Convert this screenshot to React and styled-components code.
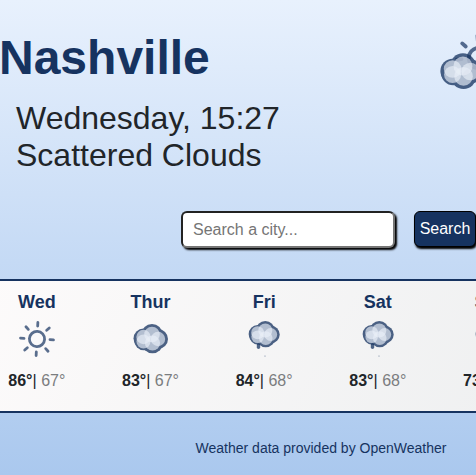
import React from "react";
import styled, { createGlobalStyle } from "styled-components";

const navy = "#163360";

const GlobalStyle = createGlobalStyle`
  * { box-sizing: border-box; }
  body {
    margin: 0;
    color: #212529;
    font-family: "Liberation Sans", Arial, sans-serif;
    font-size: 16px;
  }
`;

const Viewport = styled.div`
  min-height: 100vh;
  overflow: hidden;
  background: linear-gradient(#e8f1fd, #c5daf5 55%, #aac8ee);
`;

const Page = styled.div`
  min-width: 642px;
`;

const Header = styled.header`
  display: grid;
  grid-template-columns: 1fr auto;
  padding: 30px 104px 0 0;
`;

const City = styled.h1`
  margin: 0 0 0 -1px;
  color: ${navy};
  font-size: 48px;
  line-height: 56px;
`;

const Details = styled.p`
  grid-column: 1 / -1;
  margin: 0;
  padding: 14px 16px 0;
  font-size: 32px;
  line-height: 37px;
`;

const CurrentIcon = styled.svg`
  display: block;
  width: 100px;
  height: 56px;
  overflow: visible;
`;

const SearchForm = styled.form`
  display: flex;
  justify-content: center;
  align-items: flex-start;
  gap: 19px;
  padding: 37px 0 30px 15px;
`;

const SearchInput = styled.input`
  width: 214px;
  height: 37px;
  padding: 0 10px;
  border: 2px solid;
  border-color: #222 #767676 #767676 #222;
  border-radius: 6px;
  background: #fff;
  box-shadow: 2px 2px 2px #000;
  font: 16px "Liberation Sans", Arial, sans-serif;
  &::placeholder { color: #757575; opacity: 1; }
`;

const SearchButton = styled.button`
  width: 62px;
  height: 36px;
  padding: 0;
  border: 1px solid #000;
  border-radius: 6px;
  background: ${navy};
  color: #fff;
  box-shadow: 1px 2px 2px #000;
  font: 16px "Liberation Sans", Arial, sans-serif;
`;

const Forecast = styled.section`
  display: grid;
  grid-template-columns: repeat(6, 1fr);
  margin: 1px -20px 0;
  padding: 11px 0 21px;
  border: solid ${navy};
  border-width: 2px 0;
  background: linear-gradient(120deg, #fdfbfb, #ebedee);
`;

const Day = styled.article`
  text-align: center;
`;

const DayName = styled.h2`
  margin: 0;
  color: ${navy};
  font-size: 18px;
  line-height: 20px;
`;

const DayIcon = styled.svg`
  display: block;
  width: 50px;
  height: 50px;
  margin: 2px auto 8px;
`;

const Temps = styled.p`
  margin: 0;
  line-height: 18px;
`;

const Low = styled.span`
  color: #7b7d7f;
`;

const Footer = styled.footer`
  padding: 27px 0 19px;
  color: ${navy};
  font-size: 14px;
  line-height: 16px;
  text-align: center;
`;

const FooterLink = styled.a`
  color: inherit;
  text-decoration: none;
`;

const rays = [0, 45, 90, 135, 180, 225, 270, 315];

function Sun({ cx = 25, cy = 25, scale = 1, turn = 3 }) {
  return (
    <g
      transform={`translate(${cx} ${cy}) scale(${scale}) rotate(${turn})`}
      fill="none"
      stroke={navy}
      strokeWidth="2.8"
      strokeLinecap="round"
      opacity="0.7"
    >
      <circle r="7.6" />
      {rays.map((a) => (
        <path key={a} d="M0-13V-16.5" transform={`rotate(${a})`} />
      ))}
    </g>
  );
}

const lobes = [
  [18.5, 24.5, 10],
  [27, 20.5, 10.5],
  [33, 25, 10],
  [27.5, 28.8, 10.5],
  [19, 26.5, 9.8],
];

const puffs = [
  [18.5, 23, 7.2],
  [27, 20.5, 7.8],
  [33, 25, 7.2],
  [27.5, 29, 7.6],
  [18.5, 27.5, 7],
];

function Cloud({ x = 0, y = 0, scale = 1 }) {
  return (
    <g transform={`translate(${x} ${y}) scale(${scale})`}>
      <g opacity="0.76" fill={navy}>
        {lobes.map(([cx, cy, r]) => (
          <circle key={`${cx}-${cy}`} cx={cx} cy={cy} r={r} />
        ))}
      </g>
      <g fill="#f3f7ff" opacity="0.94">
        {puffs.map(([cx, cy, r]) => (
          <circle key={`${cx}-${cy}`} cx={cx} cy={cy} r={r} opacity="0.66" />
        ))}
      </g>
    </g>
  );
}

function RainCloud() {
  return (
    <>
      <path
        d="M19.5 31V33.2"
        stroke={navy}
        strokeWidth="3.4"
        strokeLinecap="round"
        opacity="0.75"
      />
      <Cloud x={2} y={-2} scale={0.9} />
      <circle cx="26" cy="42" r="0.6" fill={navy} opacity="0.6" />
    </>
  );
}

const icons = { sun: Sun, cloud: Cloud, rain: RainCloud };

const days = [
  ["Wed", "sun", 86, 67],
  ["Thur", "cloud", 83, 67],
  ["Fri", "rain", 84, 68],
  ["Sat", "rain", 83, 68],
  ["Sun", "rain", 73, 66],
  ["Mon", "cloud", 76, 65],
];

export default function App() {
  return (
    <Viewport>
      <GlobalStyle />
      <Page>
        <Header>
          <City>Nashville</City>
          <CurrentIcon viewBox="0 0 100 56" aria-hidden="true">
            <Sun cx={41} cy={28} scale={1.35} turn={-4} />
            <Cloud x={-8} y={11} scale={1.22} />
          </CurrentIcon>
          <Details>
            Wednesday, 15:27
            <br />
            Scattered Clouds
          </Details>
        </Header>
        <SearchForm onSubmit={(e) => e.preventDefault()}>
          <SearchInput type="search" aria-label="City" placeholder="Search a city..." />
          <SearchButton type="submit">Search</SearchButton>
        </SearchForm>
        <Forecast>
          {days.map(([name, icon, high, low]) => {
            const Icon = icons[icon];
            return (
              <Day key={name}>
                <DayName>{name}</DayName>
                <DayIcon viewBox="0 0 50 50" aria-hidden="true">
                  <Icon />
                </DayIcon>
                <Temps>
                  <b>{high}°</b>| <Low>{low}°</Low>
                </Temps>
              </Day>
            );
          })}
        </Forecast>
        <Footer>
          Weather data provided by <FooterLink href="#openweather">OpenWeather</FooterLink>
        </Footer>
      </Page>
    </Viewport>
  );
}
